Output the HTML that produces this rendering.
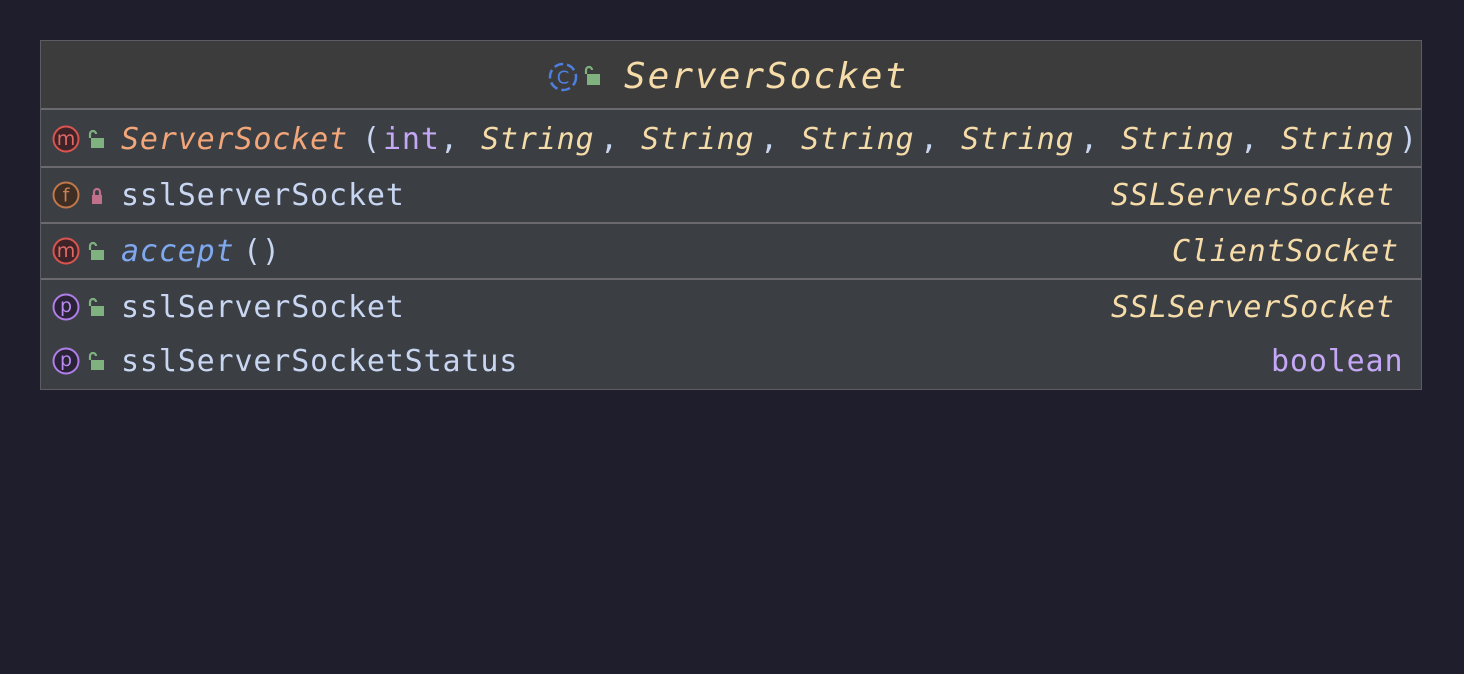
<!DOCTYPE html>
<html><head><meta charset="utf-8"><style>
*{margin:0;padding:0;box-sizing:border-box}
body{width:1464px;height:674px;background:#1e1e2d;position:relative;overflow:hidden;font-family:"DejaVu Sans Mono","Liberation Mono",monospace}
#box{position:absolute;left:40px;top:40px;width:1382px;height:350px;border:1px solid #5c5c62;background:#3b3f44}
#hdr{position:absolute;left:0;top:0;width:100%;height:69px;background:#3c3c3c;border-bottom:2px solid #6a6a6e}
.sep{position:absolute;left:0;width:100%;height:2px;background:#6a6a6e}
.t{position:absolute;font-size:30px;letter-spacing:0.85px;line-height:34px;white-space:pre;color:#c8d3f5}
.i{font-style:italic}
.y{color:#f6dca8}.o{color:#f2a679}.b{color:#7fa8ef}.p{color:#c4a7f5}.w{color:#c9d6f2}
svg{position:absolute}
</style></head><body>
<div id="box">
<div id="hdr"></div>
<div class="sep" style="top:125px"></div>
<div class="sep" style="top:181px"></div>
<div class="sep" style="top:237px"></div>
</div>
<svg style="left:547px;top:61px" width="32" height="32" viewBox="0 0 32 32"><circle cx="16" cy="16" r="13" fill="none" stroke="#4f7fe0" stroke-width="2.5" stroke-dasharray="9 4"/><text x="16" y="22.5" text-anchor="middle" font-family="DejaVu Sans" font-size="18" fill="#4f7fe0">C</text></svg>
<svg style="left:583px;top:65px" width="20" height="22" viewBox="0 0 20 22"><path d="M3 9V5a3 3 0 0 1 6 0" fill="none" stroke="#7fb27f" stroke-width="2.2"/><rect x="4" y="9" width="13" height="11" fill="#7fb27f"/></svg>
<div class="t i y" style="left:624px;top:56px;font-size:36px;letter-spacing:2px;line-height:42px">ServerSocket</div>

<svg style="left:52px;top:125px" width="28" height="28" viewBox="0 0 28 28"><circle cx="14" cy="14" r="12.5" fill="#3e2428" stroke="#d9534f" stroke-width="2"/><text x="14" y="20" text-anchor="middle" font-family="DejaVu Sans" font-size="19" fill="#e06a66">m</text></svg>
<svg style="left:52px;top:181px" width="28" height="28" viewBox="0 0 28 28"><circle cx="14" cy="14" r="12.5" fill="#3e2e24" stroke="#c0784a" stroke-width="2"/><text x="14" y="20.5" text-anchor="middle" font-family="DejaVu Sans" font-size="19" fill="#c98257">f</text></svg>
<svg style="left:52px;top:237px" width="28" height="28" viewBox="0 0 28 28"><circle cx="14" cy="14" r="12.5" fill="#3e2428" stroke="#d9534f" stroke-width="2"/><text x="14" y="20" text-anchor="middle" font-family="DejaVu Sans" font-size="19" fill="#e06a66">m</text></svg>
<svg style="left:52px;top:293px" width="28" height="28" viewBox="0 0 28 28"><circle cx="14" cy="14" r="12.5" fill="#2a2336" stroke="#b07ee8" stroke-width="2"/><text x="14" y="19" text-anchor="middle" font-family="DejaVu Sans" font-size="19" fill="#b88af0">p</text></svg>
<svg style="left:52px;top:347px" width="28" height="28" viewBox="0 0 28 28"><circle cx="14" cy="14" r="12.5" fill="#2a2336" stroke="#b07ee8" stroke-width="2"/><text x="14" y="19" text-anchor="middle" font-family="DejaVu Sans" font-size="19" fill="#b88af0">p</text></svg>

<svg style="left:87px;top:129px" width="20" height="22" viewBox="0 0 20 22"><path d="M3 9V5a3 3 0 0 1 6 0" fill="none" stroke="#7fb27f" stroke-width="2.2"/><rect x="4" y="9" width="13" height="10" fill="#7fb27f"/></svg>
<svg style="left:87px;top:185px" width="20" height="22" viewBox="0 0 20 22"><path d="M7 10V7a3 3 0 0 1 6 0v3" fill="none" stroke="#c0708a" stroke-width="2.2"/><rect x="5" y="10" width="10" height="9" fill="#c0708a"/></svg>
<svg style="left:87px;top:241px" width="20" height="22" viewBox="0 0 20 22"><path d="M3 9V5a3 3 0 0 1 6 0" fill="none" stroke="#7fb27f" stroke-width="2.2"/><rect x="4" y="9" width="13" height="10" fill="#7fb27f"/></svg>
<svg style="left:87px;top:297px" width="20" height="22" viewBox="0 0 20 22"><path d="M3 9V5a3 3 0 0 1 6 0" fill="none" stroke="#7fb27f" stroke-width="2.2"/><rect x="4" y="9" width="13" height="10" fill="#7fb27f"/></svg>
<svg style="left:87px;top:351px" width="20" height="22" viewBox="0 0 20 22"><path d="M3 9V5a3 3 0 0 1 6 0" fill="none" stroke="#7fb27f" stroke-width="2.2"/><rect x="4" y="9" width="13" height="10" fill="#7fb27f"/></svg>

<div class="t i o" style="left:121px;top:123px">ServerSocket</div>
<div class="t w" style="left:362px;top:123px">(</div>
<div class="t p" style="left:383px;top:123px">int</div>
<div class="t w" style="left:440px;top:123px">,</div>
<div class="t i y" style="left:481px;top:123px">String</div>
<div class="t w" style="left:600px;top:123px">,</div>
<div class="t i y" style="left:641px;top:123px">String</div>
<div class="t w" style="left:760px;top:123px">,</div>
<div class="t i y" style="left:801px;top:123px">String</div>
<div class="t w" style="left:920px;top:123px">,</div>
<div class="t i y" style="left:961px;top:123px">String</div>
<div class="t w" style="left:1080px;top:123px">,</div>
<div class="t i y" style="left:1121px;top:123px">String</div>
<div class="t w" style="left:1240px;top:123px">,</div>
<div class="t i y" style="left:1281px;top:123px">String</div>
<div class="t w" style="left:1399px;top:123px">)</div>
<div class="t w" style="left:121px;top:179px">sslServerSocket</div>
<div class="t i y" style="left:1111px;top:179px">SSLServerSocket</div>
<div class="t i b" style="left:121px;top:235px">accept</div>
<div class="t w" style="left:243px;top:235px">()</div>
<div class="t i y" style="left:1172px;top:235px">ClientSocket</div>
<div class="t w" style="left:121px;top:291px">sslServerSocket</div>
<div class="t i y" style="left:1111px;top:291px">SSLServerSocket</div>
<div class="t w" style="left:121px;top:345px">sslServerSocketStatus</div>
<div class="t p" style="left:1271px;top:345px">boolean</div>
</body></html>
